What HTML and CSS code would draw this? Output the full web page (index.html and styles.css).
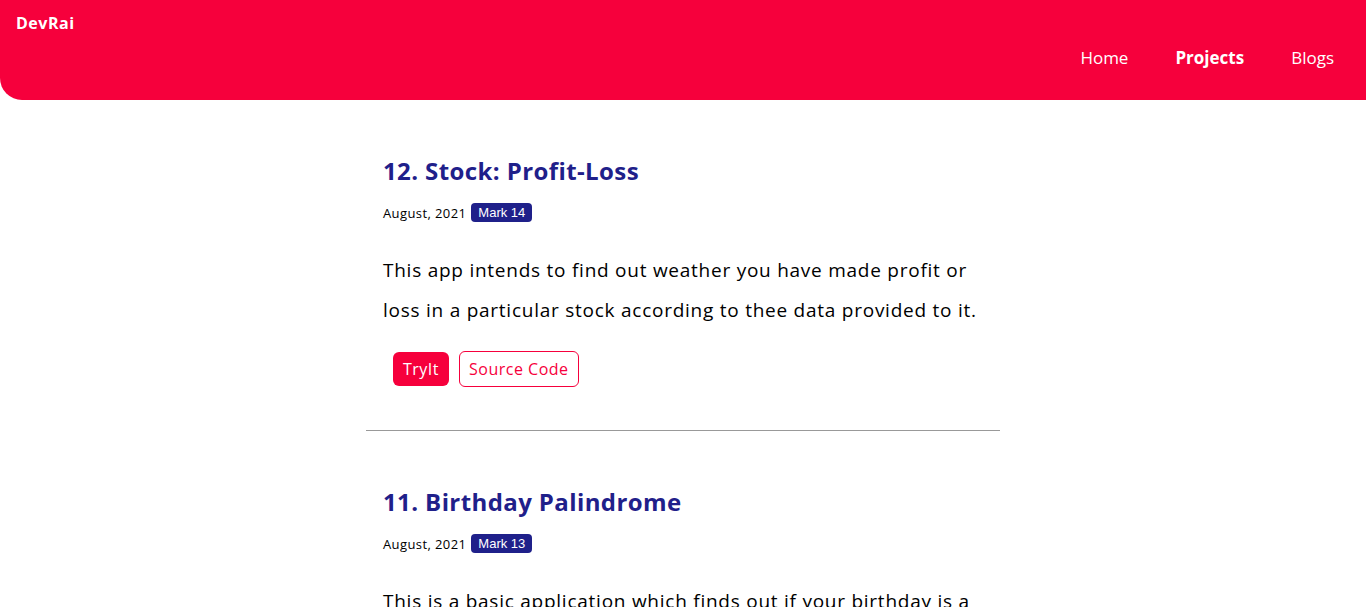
FILE: index.html
```html
<!DOCTYPE html>
<html lang="en">
<head>
<meta charset="utf-8">
<title>DevRai - Projects</title>
<link rel="stylesheet" href="styles.css">
</head>
<body>
<header class="site-header">
  <div class="brand">DevRai</div>
  <nav class="nav">
    <a class="nav-link" href="#">Home</a>
    <a class="nav-link active" href="#">Projects</a>
    <a class="nav-link" href="#">Blogs</a>
  </nav>
</header>
<main class="container">
  <article class="project">
    <h2 class="project-title">12. Stock: Profit-Loss</h2>
    <div class="meta"><span class="date">August, 2021</span><span class="badge">Mark 14</span></div>
    <p class="desc">This app intends to find out weather you have made profit or loss in a particular stock according to thee data provided to it.</p>
    <div class="actions">
      <a class="btn btn-primary" href="#">TryIt</a>
      <a class="btn btn-outline" href="#">Source Code</a>
    </div>
  </article>
  <hr class="divider">
  <article class="project">
    <h2 class="project-title">11. Birthday Palindrome</h2>
    <div class="meta"><span class="date">August, 2021</span><span class="badge">Mark 13</span></div>
    <p class="desc">This is a basic application which finds out if your birthday is a palindrome or not in any of the date formats.</p>
    <div class="actions">
      <a class="btn btn-primary" href="#">TryIt</a>
      <a class="btn btn-outline" href="#">Source Code</a>
    </div>
  </article>
</main>
</body>
</html>
```
FILE: styles.css
```css
* { box-sizing: border-box; }
body {
  margin: 0;
  font-family: "Open Sans", "Liberation Sans", sans-serif;
  color: #000;
  background: #fff;
}
.site-header {
  background: #f6003c;
  height: 100px;
  border-bottom-left-radius: 22px;
  color: #fff;
  padding: 13px 32px 0 16px;
  display: flex;
  flex-direction: column;
}
.brand {
  font-weight: 700;
  font-size: 16px;
  line-height: 20px;
  letter-spacing: 0.5px;
}
.nav {
  display: flex;
  justify-content: flex-end;
  gap: 47px;
  margin-top: 14px;
}
.nav-link {
  color: #fff;
  text-decoration: none;
  font-size: 17px;
  line-height: 22px;
}
.nav-link.active { font-weight: 700; }
.container {
  width: 634px;
  margin: 0 auto;
}
.project {
  padding: 56px 17px 0;
}
.project-title {
  margin: 0;
  font-size: 24px;
  line-height: 30px;
  font-weight: 700;
  letter-spacing: 0.4px;
  color: #1f208a;
}
.meta {
  margin-top: 17px;
  display: flex;
  align-items: center;
  gap: 5px;
  font-size: 13px;
}
.date { letter-spacing: 0.4px; }
.badge {
  background: #1f208a;
  color: #fff;
  font-family: "Liberation Sans", Arial, sans-serif;
  font-size: 13px;
  line-height: 19px;
  padding: 0 7px;
  border-radius: 4px;
}
.desc {
  margin: 28px 0 0;
  font-size: 19px;
  line-height: 40px;
  letter-spacing: 0.75px;
}
.actions {
  display: flex;
  gap: 10px;
  padding-left: 10px;
  margin-top: 21px;
  align-items: center;
}
.btn {
  font-size: 16px;
  text-decoration: none;
  border-radius: 6px;
  line-height: 20px;
  letter-spacing: 0.5px;
}
.btn-primary {
  background: #f6003c;
  color: #fff;
  padding: 7px 10px;
  border: 0;
}
.btn-outline {
  color: #f6003c;
  border: 1px solid #f6003c;
  padding: 7px 9px;
}
.divider {
  margin: 43px 0 0;
  border: 0;
  border-top: 1px solid #999;
  height: 0;
}
```
